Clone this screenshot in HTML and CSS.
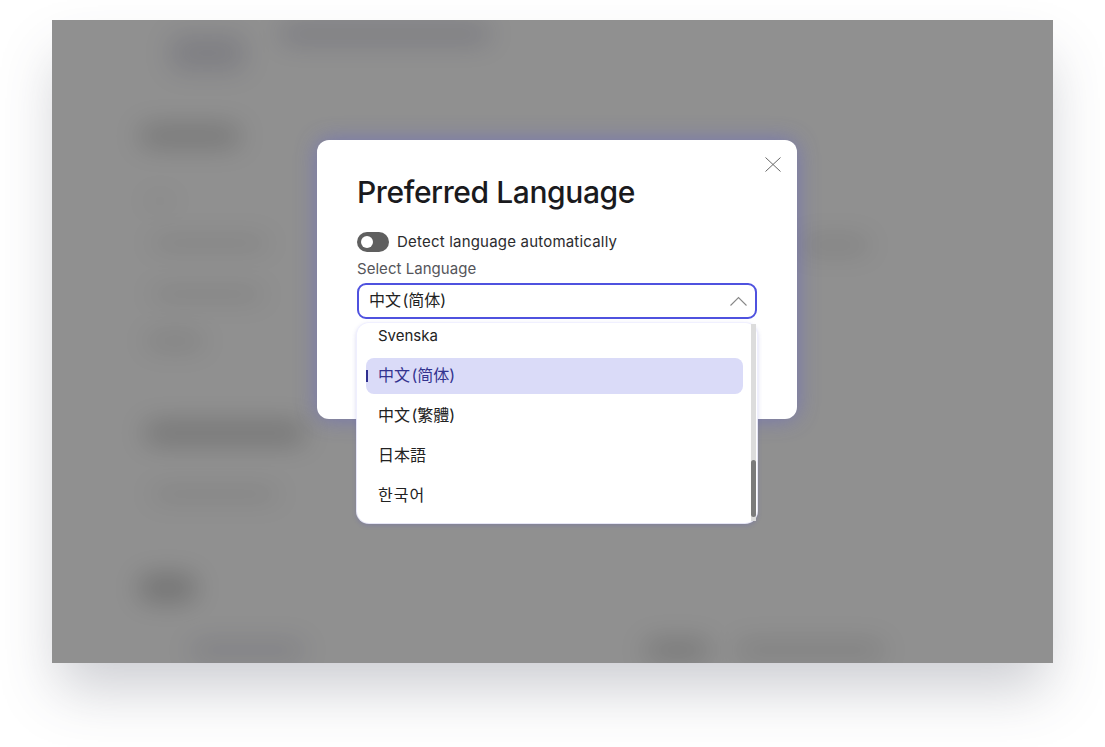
FILE: index.html
```html
<!DOCTYPE html>
<html lang="en">
<head>
<meta charset="utf-8">
<title>Preferred Language</title>
<link rel="stylesheet" href="styles.css">
</head>
<body>
<div class="window">
  <div class="backdrop" aria-hidden="true">
    <div class="topbar"><span class="blob logo"></span><span class="blob brand"></span></div>
    <section class="sec s1">
      <div class="blob h1"></div>
      <div class="blob r1"></div>
      <div class="pair"><span class="blob r2"></span><span class="blob r2b"></span></div>
      <div class="blob r3"></div>
      <div class="blob r4"></div>
    </section>
    <section class="sec s2">
      <div class="blob h2"></div>
      <div class="blob r5"></div>
    </section>
    <section class="sec s3">
      <div class="blob h3"></div>
      <div class="pair foot"><span class="blob f1"></span><span class="blob f2"></span><span class="blob f3"></span></div>
    </section>
  </div>
  <div class="overlay"></div>
  <div class="modal" role="dialog">
    <button class="close" aria-label="Close">
      <svg width="16" height="15" viewBox="0 0 16 15"><path d="M.5.5l15 14M15.500.5l-15 14" fill="none" stroke="#666" stroke-width="1"/></svg>
    </button>
    <h1 class="title">Preferred Language</h1>
    <div class="detect"><span class="toggle"><span class="knob"></span></span><span class="detect-label">Detect language automatically</span></div>
    <div class="field-label">Select Language</div>
    <div class="select">
      <span class="cjk cjk-sc">中文 (简体)</span>
      <svg class="chev" width="17" height="10" viewBox="0 0 17 10"><path d="M.5 9.500L8.500 1.500l8 8" fill="none" stroke="#888" stroke-width="1.100"/></svg>
    </div>
    <div class="menu">
      <ul class="list">
        <li class="item">Svenska</li>
        <li class="item active cjk cjk-sc">中文 (简体)</li>
        <li class="item cjk cjk-tc">中文 (繁體)</li>
        <li class="item cjk cjk-jp">日本語</li>
        <li class="item cjk cjk-kr">한국어</li>
      </ul>
      <div class="track"><div class="thumb"></div></div>
    </div>
  </div>
</div>
</body>
</html>
```
FILE: styles.css
```css
* { box-sizing: border-box; }
html, body { height: 100%; }
body {
  margin: 0;
  background: #fff;
  padding: 20px 52px 0;
  overflow: hidden;
  font-family: "Inter", "Noto Sans CJK SC", sans-serif;
  color: #1c1c1f;
}
.window {
  position: relative;
  width: 1001px;
  height: 643px;
  background: #fff;
  box-shadow: 0 32px 54px -6px rgba(60, 64, 84, .26);
}
.backdrop {
  height: 100%;
  overflow: hidden;
  padding: 7px 88px 0;
  background: #fff;
}
.blob {
  display: block;
  background: #000;
  filter: blur(14px);
  border-radius: 6px;
  opacity: .1;
}
.topbar { display: flex; align-items: flex-start; gap: 35px; padding-left: 30px; height: 99px; }
.logo { width: 75px; height: 36px; margin-top: 8px; background: #26265e; opacity: .14; }
.brand { width: 210px; height: 14px; background: #26265e; opacity: .24; }
.h1 { width: 100px; height: 20px; opacity: .2; }
.r1 { width: 30px; height: 10px; margin: 50px 0 0 5px; }
.pair { display: flex; justify-content: space-between; }
.r2 { width: 120px; height: 14px; margin: 30px 0 0 10px; }
.r2b { width: 70px; height: 18px; margin: 30px 95px 0 0; }
.r3 { width: 115px; height: 14px; margin: 33px 0 0 10px; }
.r4 { width: 60px; height: 18px; margin: 31px 0 0 5px; }
.s2 { padding-top: 73px; }
.h2 { width: 160px; height: 20px; margin-left: 5px; opacity: .22; }
.r5 { width: 130px; height: 14px; margin: 44px 0 0 10px; }
.s3 { padding-top: 75px; }
.h3 { width: 55px; height: 24px; opacity: .24; }
.foot { margin-top: 41px; }
.f1 { width: 115px; height: 18px; margin-left: 50px; background: #26265e; opacity: .14; }
.f2 { width: 65px; height: 18px; margin-left: 340px; opacity: .2; }
.f3 { width: 150px; height: 18px; margin: 0 auto 0 25px; opacity: .12; }
.overlay {
  position: absolute;
  inset: 0;
  background: rgba(0, 0, 0, .435);
}
.modal {
  position: absolute;
  left: 265px;
  top: 120px;
  width: 480px;
  height: 279px;
  padding: 33px 40px 0;
  background: #fff;
  border-radius: 12px;
  box-shadow: 0 0 22px rgba(80, 80, 225, .42);
}
.close {
  position: absolute;
  top: 17px;
  right: 16px;
  width: 16px;
  height: 15px;
  padding: 0;
  border: 0;
  background: none;
  line-height: 0;
}
.title {
  margin: 0;
  font-size: 30px;
  line-height: 38px;
  font-weight: 500;
  letter-spacing: -.4px;
  color: #1a1a1d;
}
.detect { display: flex; align-items: center; gap: 8px; margin-top: 21px; height: 20px; }
.toggle { display: flex; align-items: center; width: 32px; height: 20px; padding-left: 4px; border-radius: 10px; background: #5f5f5f; }
.knob { width: 12px; height: 12px; border-radius: 50%; background: #fff; }
.detect-label { font-size: 15px; line-height: 20px; letter-spacing: .2px; color: #2b2b2e; }
.field-label { margin-top: 7px; font-size: 15px; line-height: 20px; letter-spacing: .04px; color: #55555a; }
.select {
  display: flex;
  align-items: center;
  justify-content: space-between;
  height: 36px;
  margin-top: 4px;
  padding: 0 8px 3px 10px;
  border: 2px solid #4f52df;
  border-radius: 9px;
  font-size: 15px;
  color: #222;
}
.chev { margin-top: 2px; }
.menu {
  position: absolute;
  left: 40px;
  top: 183px;
  width: 400px;
  height: 200px;
  background: #fff;
  border-radius: 12px;
  box-shadow: 0 0 0 1px rgba(240, 240, 255, .9), 0 2px 4px 1px rgba(80, 80, 190, .22);
}
.list {
  list-style: none;
  height: 100%;
  margin: 0;
  padding: 0 14px 0 9px;
  overflow: hidden;
  border-radius: 12px;
}
.item {
  position: relative;
  height: 36px;
  margin-bottom: 4px;
  padding-left: 12px;
  border-radius: 8px;
  font-size: 15px;
  line-height: 36px;
  color: #222;
}
.item:first-child { margin-top: -5px; }
.cjk { font-size: 16px; word-spacing: -3px; }
.item.cjk { line-height: 34px; }
.select .cjk { line-height: 1; }
.active { background: #dadbf8; color: #33338f; }
.active::before {
  content: "";
  position: absolute;
  left: 0;
  top: 12px;
  width: 2px;
  height: 12px;
  background: #2f2f8f;
}
.cjk-sc { font-family: "Inter", "Noto Sans CJK SC", sans-serif; }
.cjk-tc { font-family: "Inter", "Noto Sans CJK TC", sans-serif; }
.cjk-jp { font-family: "Inter", "Noto Sans CJK JP", sans-serif; }
.cjk-kr { font-family: "Inter", "Noto Sans CJK KR", sans-serif; letter-spacing: 1px; }
.track {
  position: absolute;
  right: 1px;
  top: 1px;
  bottom: 2px;
  width: 5px;
  background: #dcdcdc;
}
.thumb {
  position: absolute;
  left: 0;
  right: 0;
  bottom: 4px;
  height: 57px;
  border-radius: 3px;
  background: #7b7b7b;
}
```
